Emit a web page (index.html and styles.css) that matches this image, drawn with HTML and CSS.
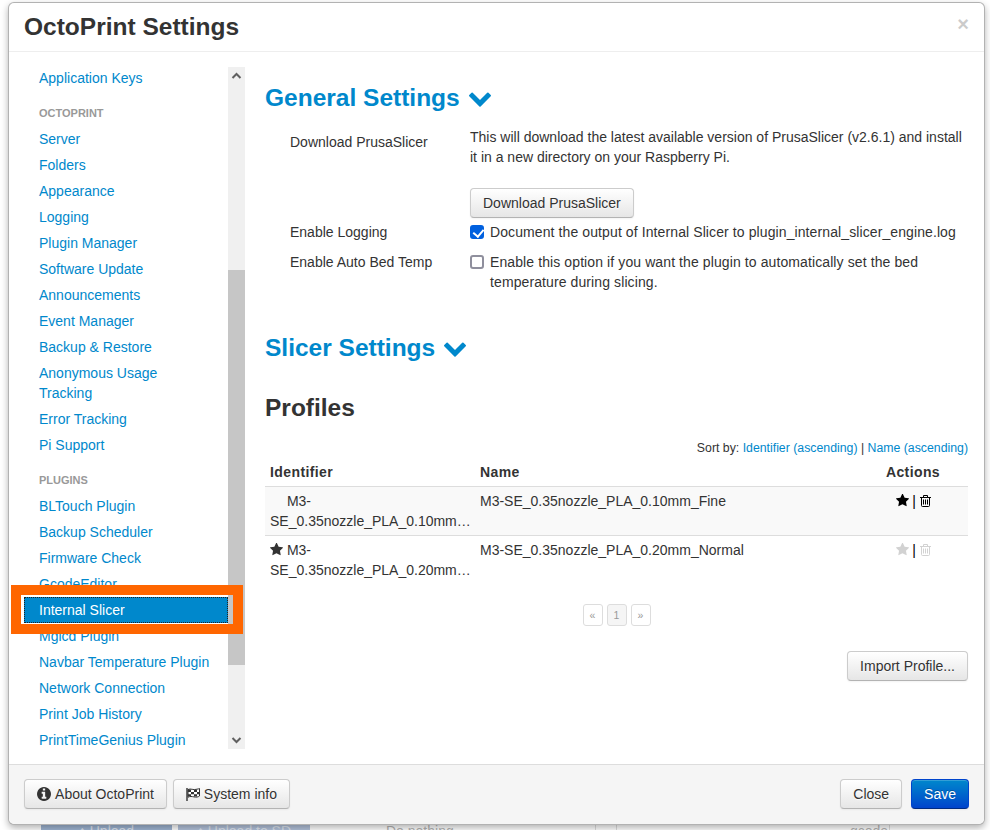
FILE: index.html
```html
<!DOCTYPE html>
<html lang="en">
<head>
    <meta charset="UTF-8">
    <meta name="viewport" content="width=device-width, initial-scale=1.0">
    <title>OctoPrint Settings</title>
    <link rel="stylesheet" href="styles.css">
</head>
<body>
    <svg class="icon-defs" aria-hidden="true">
        <symbol id="i-star" viewBox="64 96 1664 1600"><path d="M1728 647q0 22-26 48l-363 354 86 500q1 7 1 20 0 21-10.5 35.5t-30.5 14.5q-19 0-40-12l-449-236-449 236q-22 12-40 12-21 0-31.5-14.5t-10.5-35.5q0-6 2-20l86-500-364-354q-25-27-25-48 0-37 56-46l502-73 225-455q19-41 49-41t49 41l225 455 502 73q56 9 56 46z" fill="currentColor"/></symbol>
        <symbol id="i-trash" viewBox="0 0 11 12"><path d="M3.5 2V.5h4V2M0 2.5h11M1.5 2.5v8q0 1 1 1h6q1 0 1-1v-8M3.500 4.500v5M5.500 4.500v5M7.500 4.500v5" fill="none" stroke="currentColor"/></symbol>
        <symbol id="i-chevron" viewBox="90 510 1612 1060"><path d="M1683 808l-742 741q-19 19-45 19t-45-19l-742-741q-19-19-19-45.5t19-45.5l166-165q19-19 45-19t45 19l531 531 531-531q19-19 45-19t45 19l166 165q19 19 19 45.5t-19 45.5z" fill="currentColor"/></symbol>
    </svg>

    <!-- page behind the dialog, only a sliver shows -->
    <div class="backdrop">
        <span class="bg-btn">&#8593; Upload</span>
        <span class="bg-btn bg-btn-sd">&#8593; Upload to SD</span>
        <span class="bg-select">Do nothing</span>
        <span class="bg-cell"></span>
        <span class="bg-cell bg-gcode">gcode</span>
    </div>

    <div class="modal">
        <div class="modal-header">
            <h3>OctoPrint Settings</h3>
            <span class="close-x">&times;</span>
        </div>

        <div class="modal-body">
            <div class="sidebar">
                <div class="nav-scroll">
                    <ul class="nav-list">
                        <li><a href="#">Application Keys</a></li>
                        <li class="nav-header">OctoPrint</li>
                        <li><a href="#">Server</a></li>
                        <li><a href="#">Folders</a></li>
                        <li><a href="#">Appearance</a></li>
                        <li><a href="#">Logging</a></li>
                        <li><a href="#">Plugin Manager</a></li>
                        <li><a href="#">Software Update</a></li>
                        <li><a href="#">Announcements</a></li>
                        <li><a href="#">Event Manager</a></li>
                        <li><a href="#">Backup &amp; Restore</a></li>
                        <li><a href="#">Anonymous Usage Tracking</a></li>
                        <li><a href="#">Error Tracking</a></li>
                        <li><a href="#">Pi Support</a></li>
                        <li class="nav-header">Plugins</li>
                        <li><a href="#">BLTouch Plugin</a></li>
                        <li><a href="#">Backup Scheduler</a></li>
                        <li><a href="#">Firmware Check</a></li>
                        <li><a href="#">GcodeEditor</a></li>
                        <li class="active"><a href="#">Internal Slicer</a></li>
                        <li><a href="#">Mgicd Plugin</a></li>
                        <li><a href="#">Navbar Temperature Plugin</a></li>
                        <li><a href="#">Network Connection</a></li>
                        <li><a href="#">Print Job History</a></li>
                        <li><a href="#">PrintTimeGenius Plugin</a></li>
                    </ul>
                </div>
                <div class="scrollbar">
                    <svg class="scroll-arrow" viewBox="0 0 17 17"><path d="M4.500 11l4-4 4 4" fill="none" stroke="#606060" stroke-width="2"/></svg>
                    <div class="scroll-gap"></div>
                    <div class="scroll-thumb"></div>
                    <div class="scroll-rest"></div>
                    <svg class="scroll-arrow" viewBox="0 0 17 17"><path d="M4.500 6l4 4 4-4" fill="none" stroke="#606060" stroke-width="2"/></svg>
                </div>
            </div>

            <div class="content">
                <h3 class="section-title">General Settings <svg class="chevron"><use href="#i-chevron"/></svg></h3>

                <div class="form-row form-row-first">
                    <label class="form-label form-label-pad">Download PrusaSlicer</label>
                    <div class="form-control">
                        <p class="help">This will download the latest available version of PrusaSlicer (v2.6.1) and install it in a new directory on your Raspberry Pi.</p>
                        <button class="btn">Download PrusaSlicer</button>
                    </div>
                </div>
                <div class="form-row form-row-log">
                    <label class="form-label">Enable Logging</label>
                    <label class="form-control check-line">
                        <input type="checkbox" class="check" checked>
                        <span>Document the output of Internal Slicer to plugin_internal_slicer_engine.log</span>
                    </label>
                </div>
                <div class="form-row form-row-bed">
                    <label class="form-label">Enable Auto Bed Temp</label>
                    <label class="form-control check-line">
                        <input type="checkbox" class="check">
                        <span>Enable this option if you want the plugin to automatically set the bed temperature during slicing.</span>
                    </label>
                </div>

                <h3 class="section-title section-slicer">Slicer Settings <svg class="chevron"><use href="#i-chevron"/></svg></h3>

                <h3 class="profiles-title">Profiles</h3>

                <div class="sort-by">Sort by: <a href="#">Identifier (ascending)</a> | <a href="#">Name (ascending)</a></div>

                <table class="profiles">
                    <thead>
                        <tr>
                            <th class="col-id">Identifier</th>
                            <th class="col-name">Name</th>
                            <th class="col-actions">Actions</th>
                        </tr>
                    </thead>
                    <tbody>
                        <tr class="odd">
                            <td class="col-id">
                                <svg class="star star-hidden"><use href="#i-star"/></svg> M3-
                                <span class="id-rest">SE_0.35nozzle_PLA_0.10mm_Fine</span>
                            </td>
                            <td class="col-name">M3-SE_0.35nozzle_PLA_0.10mm_Fine</td>
                            <td class="col-actions">
                                <svg class="star star-black"><use href="#i-star"/></svg>
                                <span class="sep">|</span>
                                <svg class="trash"><use href="#i-trash"/></svg>
                            </td>
                        </tr>
                        <tr>
                            <td class="col-id">
                                <svg class="star"><use href="#i-star"/></svg> M3-
                                <span class="id-rest">SE_0.35nozzle_PLA_0.20mm_Normal</span>
                            </td>
                            <td class="col-name">M3-SE_0.35nozzle_PLA_0.20mm_Normal</td>
                            <td class="col-actions">
                                <svg class="star star-off"><use href="#i-star"/></svg>
                                <span class="sep">|</span>
                                <svg class="trash trash-off"><use href="#i-trash"/></svg>
                            </td>
                        </tr>
                    </tbody>
                </table>

                <div class="pagination">
                    <a href="#">&laquo;</a>
                    <a href="#" class="current">1</a>
                    <a href="#">&raquo;</a>
                </div>

                <div class="import-row">
                    <button class="btn">Import Profile...</button>
                </div>
            </div>

            <div class="highlight"></div>
        </div>

        <div class="modal-footer">
            <div class="footer-left">
                <button class="btn">
                    <svg class="btn-icon" viewBox="128 128 1536 1536"><path d="M1152 1376v-160q0-14-9-23t-23-9h-96v-512q0-14-9-23t-23-9h-320q-14 0-23 9t-9 23v160q0 14 9 23t23 9h96v320h-96q-14 0-23 9t-9 23v160q0 14 9 23t23 9h448q14 0 23-9t9-23zm-128-896v-160q0-14-9-23t-23-9h-192q-14 0-23 9t-9 23v160q0 14 9 23t23 9h192q14 0 23-9t9-23zm640 416q0 209-103 385.5t-279.5 279.5-385.5 103-385.5-103-279.5-279.5-103-385.5 103-385.5 279.5-279.5 385.5-103 385.5 103 279.5 279.5 103 385.5z" fill="#333"/></svg>
                    About OctoPrint
                </button>
                <button class="btn">
                    <svg class="btn-icon btn-flag" viewBox="0 0 14 13">
                        <path d="M1 0v13" stroke="#333" stroke-width="1.4" fill="none"/>
                        <path d="M2 1.500c3-1.400 5 1 9-.3q1.500-.3 2.500-.7v7.500c-1.500 1.200-3.500 1.300-5.500.9s-4-.8-6 .3z" fill="#fff" stroke="#333"/>
                        <path d="M2 1.500h3v2.500h-3zM8 1.800h3v2.200h-3zM5 4h3v2.300h-3zM11 4h2.500v2.300h-2.500zM2 6.300h3v2h-3zM8 6.300h3v2.200h-3z" fill="#333"/>
                    </svg>
                    System info
                </button>
            </div>
            <div class="footer-right">
                <button class="btn">Close</button>
                <button class="btn btn-primary">Save</button>
            </div>
        </div>
    </div>
</body>
</html>
```

FILE: styles.css
```css
* {
    box-sizing: border-box;
}

body {
    margin: 0;
    height: 830px;
    overflow: hidden;
    background-color: #fff;
    color: #333;
    font-family: "Liberation Sans", Arial, sans-serif;
    font-size: 14px;
    line-height: 20px;
    display: flex;
    flex-direction: column;
    justify-content: flex-end;
}

a {
    color: #0088cc;
    text-decoration: none;
}

.icon-defs {
    display: none;
}

/* page behind the dialog */
.backdrop {
    height: 5px;
    overflow: hidden;
    display: flex;
    padding-left: 41px;
    color: #b5b5b5;
    font-size: 14px;
    line-height: 12px;
}

.bg-btn {
    width: 131px;
    height: 30px;
    margin-right: 6px;
    background-color: #9fb5d3;
    color: #dfe6f0;
    text-align: center;
}

.bg-btn-sd {
    width: 132px;
    margin-right: 71px;
    background-color: #b3c2db;
}

.bg-select {
    width: 215px;
    height: 30px;
    padding-left: 5px;
    border-right: 1px solid #ddd;
}

.bg-cell {
    width: 21px;
    height: 30px;
    border-right: 1px solid #ddd;
}

.bg-gcode {
    width: 273px;
    padding-left: 233px;
}

/* dialog */
.modal {
    position: absolute;
    left: 8px;
    top: 2px;
    width: 977px;
    height: 823px;
    display: flex;
    flex-direction: column;
    background-color: #fff;
    border: 1px solid rgba(0, 0, 0, 0.3);
    border-radius: 6px;
    box-shadow: 0 3px 7px rgba(0, 0, 0, 0.3);
}

.modal-header {
    display: flex;
    justify-content: space-between;
    padding: 9px 15px;
    border-bottom: 1px solid #eee;
}

.modal-header h3 {
    margin: 0;
    font-size: 24.5px;
    line-height: 30px;
    font-weight: bold;
}

.close-x {
    margin-top: 2px;
    font-size: 20px;
    font-weight: bold;
    color: #000;
    opacity: 0.2;
}

.modal-body {
    position: relative;
    flex: 1;
    display: flex;
    min-height: 0;
    padding: 15px 16px 15px 15px;
}

/* sidebar */
.sidebar {
    width: 221px;
    flex-shrink: 0;
    display: flex;
    margin-right: 20px;
}

.nav-scroll {
    flex: 1;
    overflow: hidden;
}

.nav-list {
    list-style: none;
    margin: -2px 0 0;
    padding: 0;
}

.nav-list a {
    display: block;
    padding: 3px 15px;
}

.nav-header {
    margin-top: 9px;
    padding: 3px 15px;
    font-size: 11px;
    font-weight: bold;
    color: #999;
    text-transform: uppercase;
}

.nav-list .active a {
    background-color: #0088cc;
    color: #fff;
    outline: 1px dotted #222;
    outline-offset: -1px;
}

.scrollbar {
    width: 17px;
    flex-shrink: 0;
    display: flex;
    flex-direction: column;
    background-color: #f0f0f0;
}

.scroll-arrow {
    width: 17px;
    height: 17px;
    flex-shrink: 0;
}

.scroll-gap {
    height: 186px;
}

.scroll-thumb {
    height: 395px;
    background-color: #c6c6c6;
}

.scroll-rest {
    flex: 1;
}

/* orange marker drawn on top of the screenshot */
.highlight {
    position: absolute;
    left: 2px;
    top: 533px;
    width: 232px;
    height: 49px;
    border: 10px solid #ff6600;
}

/* main column */
.content {
    flex: 1;
    min-width: 0;
}

.section-title {
    margin: 10px 0 0;
    font-size: 24.5px;
    line-height: 42px;
    font-weight: bold;
    color: #0088cc;
}

.chevron {
    width: 22px;
    height: 15px;
    margin-left: 2px;
    vertical-align: -1px;
}

.form-row {
    display: flex;
}

.form-row-first {
    margin-top: 8px;
}

.form-row-log {
    margin-top: 4px;
}

.form-row-bed {
    margin-top: 10px;
}

.form-label {
    width: 205px;
    flex-shrink: 0;
    padding-left: 25px;
}

.form-label-pad {
    padding-top: 5px;
}

.form-control {
    flex: 1;
    min-width: 0;
}

.help {
    margin: 0 0 21px;
}

.check-line {
    display: flex;
    align-items: flex-start;
    letter-spacing: 0.1px;
}

.check {
    appearance: none;
    position: relative;
    width: 14px;
    height: 14px;
    flex-shrink: 0;
    margin: 3px 6px 0 0;
    border: 2px solid #8f8f9d;
    border-radius: 3px;
    background-color: #fff;
}

.check:checked {
    background-color: #0060df;
    border-color: #0060df;
}

.check:checked::after {
    content: "";
    position: absolute;
    left: 2.5px;
    top: 0;
    width: 5px;
    height: 8px;
    border: solid #fff;
    border-width: 0 2px 2px 0;
    transform: rotate(40deg);
}

.section-slicer {
    margin-top: 35px;
}

.profiles-title {
    margin: 18px 0 0;
    font-size: 24.5px;
    line-height: 42px;
    font-weight: bold;
}

.sort-by {
    margin-top: 9px;
    font-size: 12.3px;
    text-align: right;
}

/* table */
.profiles {
    width: 100%;
    border-collapse: collapse;
    table-layout: fixed;
}

.profiles th {
    padding: 4px 5px;
    text-align: left;
    font-weight: bold;
    letter-spacing: 0.4px;
}

.profiles td {
    padding: 4px 5px;
    vertical-align: top;
    border-top: 1px solid #ddd;
}

.profiles .odd td {
    background-color: #f9f9f9;
}

.col-id {
    width: 210px;
}

.col-actions {
    width: 110px;
}

.profiles .col-actions {
    text-align: center;
}

.id-rest {
    display: block;
    margin-right: -3px;
    overflow: hidden;
    white-space: nowrap;
    text-overflow: ellipsis;
}

.star {
    width: 13px;
    height: 13px;
    vertical-align: -1px;
    color: #333;
}

.col-actions .star {
    margin: 0 -1px 0 1px;
}

.star-hidden {
    visibility: hidden;
}

.star-black {
    color: #000;
}

.star-off {
    color: #d2d2d2;
}

.trash {
    width: 11px;
    height: 12px;
    vertical-align: -1px;
    color: #000;
}

.trash-off {
    color: #d2d2d2;
}

.sep {
    color: #000;
}

/* pagination */
.pagination {
    display: flex;
    justify-content: center;
    gap: 4px;
    margin-top: 20px;
}

.pagination a {
    width: 20px;
    height: 22px;
    border: 1px solid #ddd;
    border-radius: 3px;
    color: #999;
    font-size: 10.5px;
    text-align: center;
}

.pagination .current {
    background-color: #f5f5f5;
}

.import-row {
    display: flex;
    justify-content: flex-end;
    margin-top: 25px;
}

/* buttons */
.btn {
    height: 30px;
    padding: 4px 12px;
    font-family: inherit;
    font-size: 14px;
    line-height: 20px;
    color: #333;
    text-shadow: 0 1px 1px rgba(255, 255, 255, 0.75);
    background-image: linear-gradient(to bottom, #fff, #e6e6e6);
    border: 1px solid #ccc;
    border-bottom-color: #b3b3b3;
    border-radius: 4px;
    box-shadow: inset 0 1px 0 rgba(255, 255, 255, 0.2), 0 1px 2px rgba(0, 0, 0, 0.05);
}

.btn-primary {
    color: #fff;
    text-shadow: 0 -1px 0 rgba(0, 0, 0, 0.25);
    background-image: linear-gradient(to bottom, #0088cc, #0044cc);
    border-color: #0044cc #0044cc #002a80;
}

.btn-icon {
    width: 14px;
    height: 14px;
    margin-right: 1px;
    vertical-align: -2px;
}

.btn-flag {
    height: 13px;
    margin-right: 0;
}

/* footer */
.modal-footer {
    height: 60px;
    display: flex;
    justify-content: space-between;
    padding: 14px 15px 15px;
    background-color: #f5f5f5;
    border-top: 1px solid #ddd;
    border-radius: 0 0 6px 6px;
}

.footer-left {
    display: flex;
    gap: 6px;
}

.footer-right {
    display: flex;
    gap: 9px;
}
```
